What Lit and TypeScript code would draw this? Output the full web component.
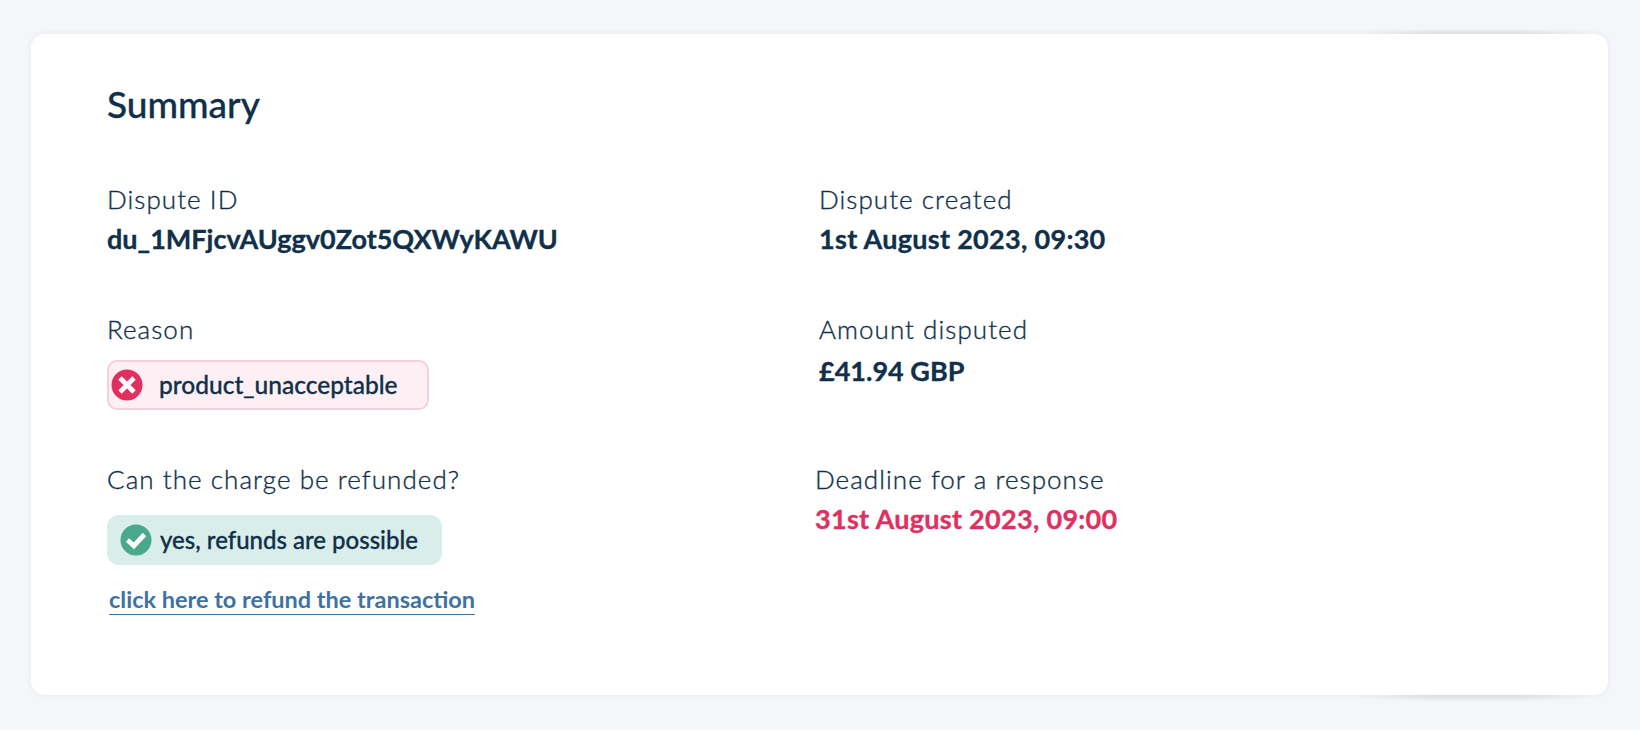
import { LitElement, html, css } from "lit";
import { customElement } from "lit/decorators.js";

@customElement("app-root")
export class AppRoot extends LitElement {
  static styles = css`
    :host {
      display: block;
      width: 1640px;
      height: 730px;
      box-sizing: border-box;
      background: #f5f6f9;
      padding: 34px 32px 35px 31px;
      font-family: "Lato", "Noto Sans", sans-serif;
      color: #10304a;
      overflow: hidden;
    }
    .frame {
      position: relative;
      height: 100%;
    }
    .frame::before {
      content: "";
      position: absolute;
      left: 1330px;
      right: 20px;
      top: -3px;
      bottom: -4px;
      border-radius: 6px;
      background: linear-gradient(to right, transparent, #e3e4e7 30%, #e3e4e7 70%, transparent);
      filter: blur(1.5px);
    }
    .card {
      position: relative;
      height: 100%;
      box-sizing: border-box;
      background: #fff;
      border-radius: 14px;
      box-shadow: 0 0 6px rgba(30, 50, 80, 0.07);
      padding: 48px 76px 0 76px;
    }
    h2 {
      margin: 0 0 58px;
      font-size: 37px;
      line-height: 44px;
      font-weight: 500;
      -webkit-text-stroke: 0.3px currentColor;
    }
    .grid {
      display: grid;
      grid-template-columns: 712px 1fr;
      grid-template-rows: 130px 150px auto;
    }
    .shift {
      margin-left: -4px;
    }
    .label {
      font-size: 26px;
      line-height: 30px;
      font-weight: 300;
      letter-spacing: 1.05px;
      -webkit-text-stroke: 0.35px currentColor;
    }
    .value {
      margin-top: 9px;
      font-size: 27px;
      line-height: 32px;
      font-weight: 700;
      -webkit-text-stroke: 0.35px currentColor;
    }
    .value.date {
      letter-spacing: 0.3px;
    }
    .value.amount {
      margin-top: 11px;
    }
    .danger {
      color: #e0305f;
    }
    .pill {
      display: flex;
      align-items: center;
      box-sizing: border-box;
      font-weight: 500;
      -webkit-text-stroke: 0.3px currentColor;
    }
    .pill svg {
      display: block;
      flex: none;
    }
    .pill span {
      padding-bottom: 2px;
    }
    .pill-bad {
      margin-top: 16px;
      width: 322px;
      height: 50px;
      padding-left: 2px;
      gap: 16px;
      font-size: 24.5px;
      background: #fcf0f4;
      border: 2px solid #f5d0dc;
      border-radius: 10px;
    }
    .pill-good {
      margin-top: 21px;
      width: 335px;
      height: 50px;
      padding-left: 13px;
      gap: 8px;
      font-size: 24px;
      background: #d9eeea;
      border-radius: 12px;
    }
    .link {
      display: inline-block;
      margin: 20px 0 0 2px;
      font-size: 23.5px;
      line-height: 29px;
      font-weight: 700;
      color: #3f729f;
      text-decoration: none;
      border-bottom: 1.5px solid #3f729f;
    }
  `;

  render() {
    return html`
      <div class="frame">
        <div class="card">
          <h2>Summary</h2>
          <div class="grid">
            <div>
              <div class="label">Dispute ID</div>
              <div class="value">du_1MFjcvAUggv0Zot5QXWyKAWU</div>
            </div>
            <div>
              <div class="label">Dispute created</div>
              <div class="value date">1st August 2023, 09:30</div>
            </div>
            <div>
              <div class="label">Reason</div>
              <div class="pill pill-bad">
                <svg width="32" height="32" viewBox="0 0 32 32">
                  <circle cx="16" cy="16" r="15.5" fill="#e0305f" />
                  <path d="M9 9 23 23M23 9 9 23" stroke="#fff" stroke-width="4.8" fill="none" />
                </svg>
                <span>product_unacceptable</span>
              </div>
            </div>
            <div>
              <div class="label">Amount disputed</div>
              <div class="value amount">£41.94 GBP</div>
            </div>
            <div>
              <div class="label">Can the charge be refunded?</div>
              <div class="pill pill-good">
                <svg width="32" height="32" viewBox="0 0 32 32">
                  <circle cx="16" cy="16" r="15.5" fill="#4aa98a" />
                  <path d="M7.5 16 13.8 21.8 24.5 10.5" stroke="#fff" stroke-width="4.8" fill="none" />
                </svg>
                <span>yes, refunds are possible</span>
              </div>
              <a class="link" href="#">click here to refund the transaction</a>
            </div>
            <div class="shift">
              <div class="label">Deadline for a response</div>
              <div class="value date danger">31st August 2023, 09:00</div>
            </div>
          </div>
        </div>
      </div>
    `;
  }
}
